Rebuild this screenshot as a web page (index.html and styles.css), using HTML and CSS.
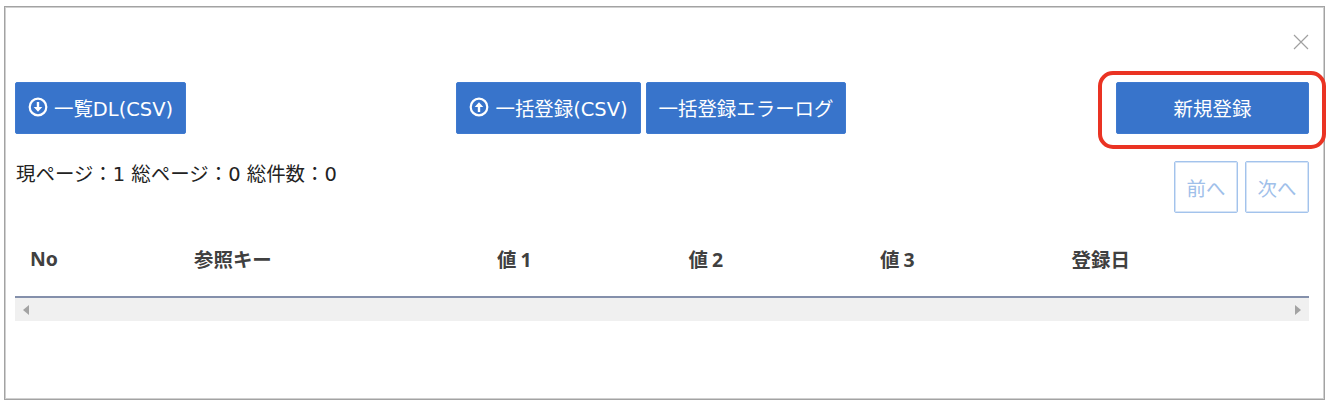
FILE: index.html
```html
<!DOCTYPE html>
<html lang="ja">
<head>
<meta charset="utf-8">
<title>一覧</title>
<link rel="stylesheet" href="styles.css">
</head>
<body>
<div class="modal">
	<div class="modal-header">
		<button type="button" class="close" aria-label="閉じる">
			<svg width="16" height="16" viewBox="0 0 16 16"><path d="M1 1L15 15M15 1L1 15"/></svg>
		</button>
	</div>
	<div class="toolbar">
		<div class="tool-left">
			<button type="button" class="btn">
				<svg class="icon" width="20" height="20" viewBox="0 0 20 20"><circle cx="10" cy="10" r="8.3"/><path d="M8.8 5h2.4v5h3.1L10 14.8 5.7 10h3.1z"/></svg>
				<span>一覧DL(CSV)</span>
			</button>
		</div>
		<div class="tool-center">
			<button type="button" class="btn btn-upload">
				<svg class="icon" width="20" height="20" viewBox="0 0 20 20"><circle cx="10" cy="10" r="8.3"/><path d="M8.8 15h2.4v-5h3.1L10 5.2 5.7 10h3.1z"/></svg>
				<span>一括登録(CSV)</span>
			</button>
			<button type="button" class="btn btn-log">一括登録エラーログ</button>
		</div>
		<div class="tool-right">
			<button type="button" class="btn btn-new">新規登録</button>
		</div>
	</div>
	<div class="paging">
		<div class="count">現ページ：1 総ページ：0 総件数：0</div>
		<div class="pager">
			<button type="button" class="btn-page" disabled>前へ</button>
			<button type="button" class="btn-page" disabled>次へ</button>
		</div>
	</div>
	<table class="list">
		<thead>
		<tr>
			<th class="col-no">No</th>
			<th class="col-key">参照キー</th>
			<th class="col-val">値<span class="num">1</span></th>
			<th class="col-val">値<span class="num">2</span></th>
			<th class="col-val">値<span class="num">3</span></th>
			<th>登録日</th>
		</tr>
		</thead>
	</table>
	<div class="scrollbar">
		<svg width="6" height="10" viewBox="0 0 6 10"><path d="M6 0v10L0 5z"/></svg>
		<svg width="6" height="10" viewBox="0 0 6 10"><path d="M0 0v10l6-5z"/></svg>
	</div>
</div>
</body>
</html>
```
FILE: styles.css
```css
* {
box-sizing:border-box;
}
body {
margin:0;
background-color:#ffffff;
color:#222222;
font-family:"DejaVu Sans","Noto Sans CJK JP",sans-serif;
font-size:19.45px;
}
button {
font:inherit;
padding:0;
white-space:nowrap;
}
.modal {
width:1321px;
height:394px;
margin:6px 0 0 4px;
padding:0 15px 0 10px;
border:1px solid #a3a3a3;
box-shadow:inset 0 0 0 1px #d0d0d0;
}
.modal-header {
display:flex;
justify-content:flex-end;
height:75px;
padding-top:27px;
}
.close {
width:16px;
height:16px;
border:0;
background:none;
}
.close svg {
display:block;
fill:none;
stroke:#a0a0a0;
stroke-width:1.2;
}
.toolbar {
display:grid;
grid-template-columns:441px 1fr 193px;
}
.tool-center {
display:flex;
gap:5px;
}
.btn {
display:flex;
align-items:center;
justify-content:center;
gap:6px;
width:171px;
height:52px;
padding-bottom:2px;
border:1px solid #3f7ad0;
border-radius:2px;
background-color:#3874cb;
color:#ffffff;
}
.btn-upload {
width:185px;
}
.btn-log {
width:200px;
}
.btn-new {
width:193px;
}
.icon {
flex:none;
}
.icon circle {
fill:none;
stroke:#ffffff;
stroke-width:2.2;
}
.icon path {
fill:#ffffff;
}
/* highlight frame round the new entry button */
.tool-right {
position:relative;
}
.tool-right::after {
content:"";
position:absolute;
top:-11px;
right:-17px;
width:220px;
height:70px;
border:4px solid #ea3323;
border-radius:15px;
pointer-events:none;
}
.paging {
display:flex;
justify-content:space-between;
height:79px;
padding-top:27px;
}
.count {
padding-left:1px;
line-height:28px;
}
.pager {
display:flex;
gap:7px;
}
.btn-page {
width:64px;
height:52px;
border:1px solid #a3c3ec;
border-radius:2px;
box-shadow:inset 0 0 0 1px #d6e4f6;
background-color:#ffffff;
color:#a0c0ea;
}
.list {
width:100%;
border-collapse:collapse;
table-layout:fixed;
}
.list th {
height:84px;
padding:8px 0 0 15px;
border-bottom:2px solid #8490ab;
color:#404040;
font-family:"Noto Sans","Noto Sans CJK JP",sans-serif;
text-align:left;
vertical-align:middle;
}
.col-no {
width:164px;
}
.col-key {
width:303px;
}
.col-val {
width:191.5px;
}
.num {
margin-left:4px;
}
.scrollbar {
display:flex;
align-items:center;
justify-content:space-between;
height:23px;
padding:0 8px;
background-color:#f0f0f0;
}
.scrollbar path {
fill:#a3a3a3;
}
```
